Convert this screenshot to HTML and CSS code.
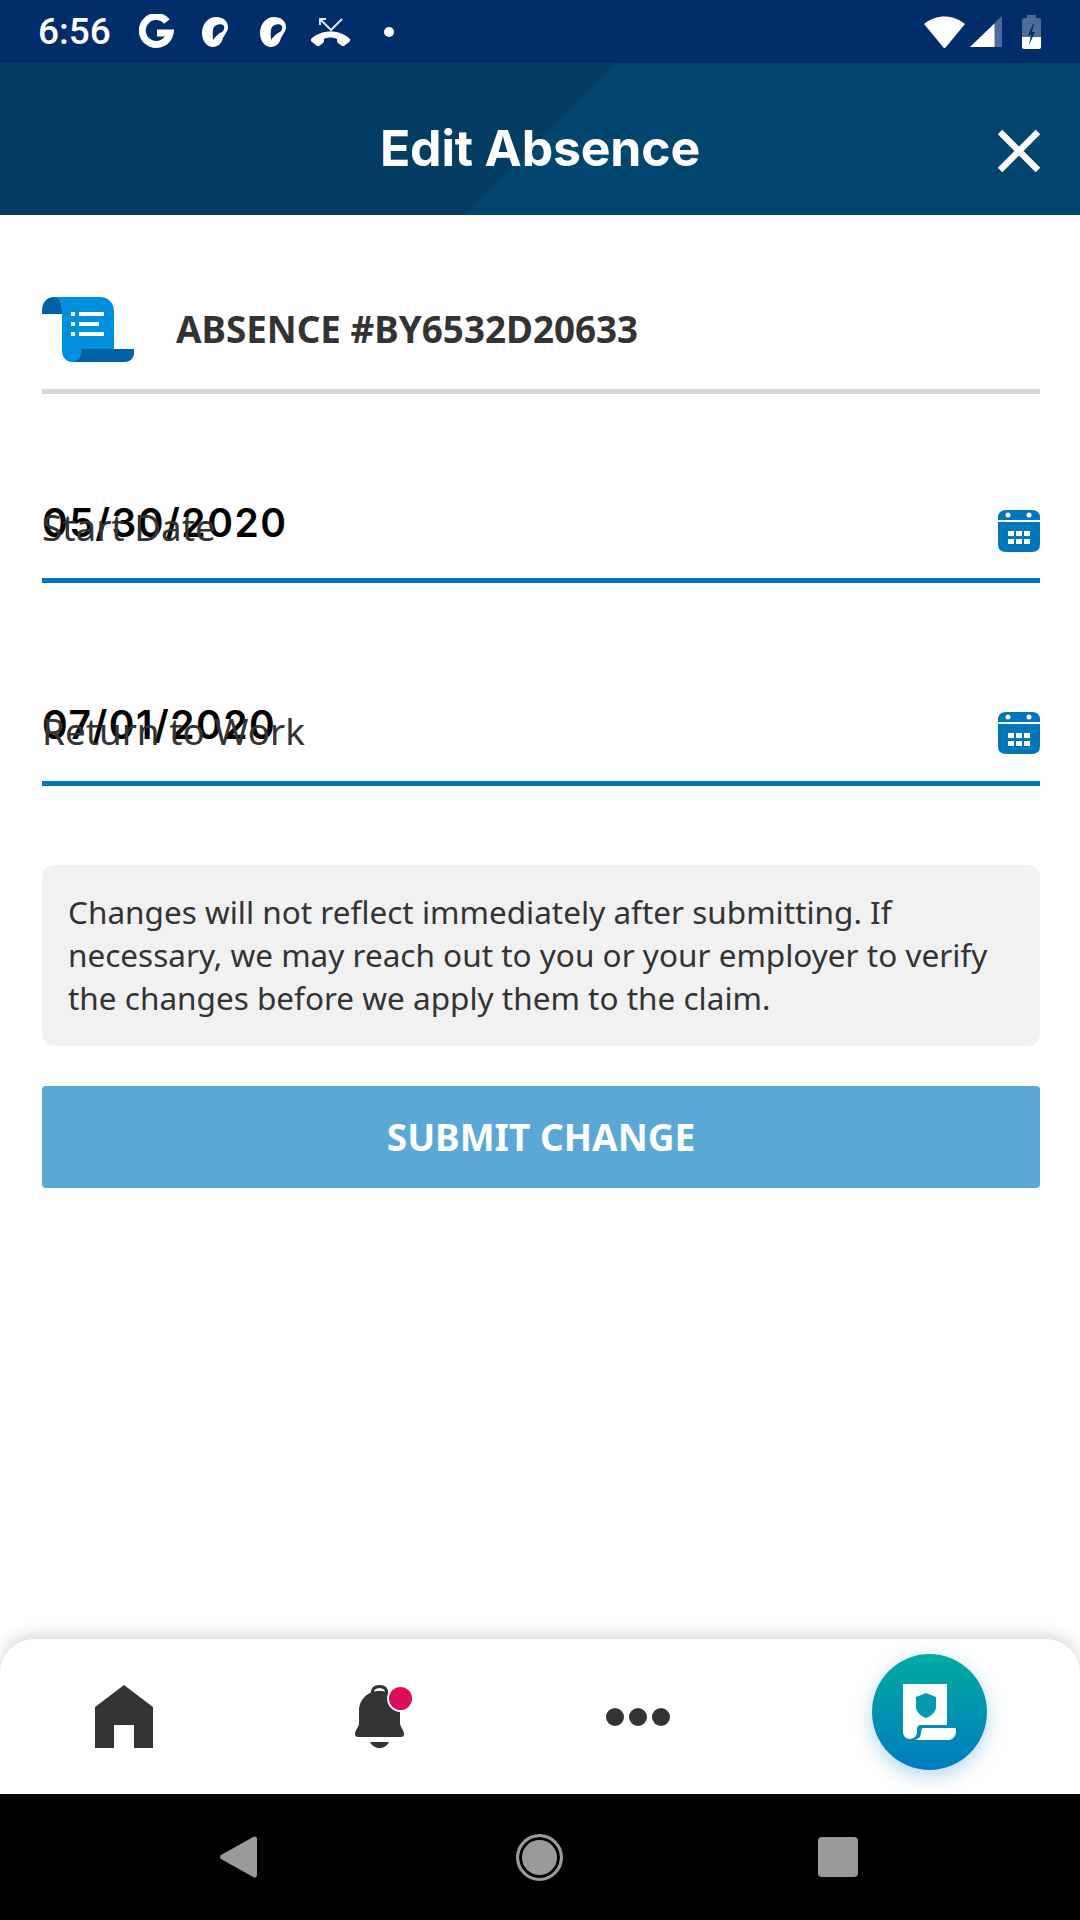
FILE: index.html
```html
<!DOCTYPE html>
<html lang="en">

<head>
    <meta charset="UTF-8">
    <meta name="viewport" content="width=device-width, initial-scale=1.0">
    <title>Edit Absence</title>
    <link rel="stylesheet" href="styles.css">
</head>

<body>
    <div class="status-bar">
        <span class="status-time">6:56</span>
        <svg class="icon-g" width="35" height="35" viewBox="0 0 35 35">
            <path d="M28 7.500A14 14 0 1 0 31 19H18" fill="none" stroke="#fff" stroke-width="7" />
        </svg>
        <svg class="icon-ear" width="26" height="30" viewBox="0 0 26 30">
            <path fill="#fff" fill-rule="evenodd" d="M14 0C21 0 26 4 26 10C26 14 23 17 21 21C20 26 16 30 11 30C5 30 0 24 0 16C0 7 6 0 14 0ZM12 10C14 7 20 6 22 9C23 12 21 15 18 16C15 18 13 20 11 23C11 18 10 14 12 10Z" />
        </svg>
        <svg class="icon-ear-2" width="26" height="30" viewBox="0 0 26 30">
            <path fill="#fff" fill-rule="evenodd" d="M14 0C21 0 26 4 26 10C26 14 23 17 21 21C20 26 16 30 11 30C5 30 0 24 0 16C0 7 6 0 14 0ZM12 10C14 7 20 6 22 9C23 12 21 15 18 16C15 18 13 20 11 23C11 18 10 14 12 10Z" />
        </svg>
        <svg class="icon-missed" width="39" height="29" viewBox="0 0 39 29">
            <path d="M9 8V2H15M9 2L20 13L31 2" fill="none" stroke="#dfe6f0" stroke-width="2" />
            <path fill="#fff" d="M0 22C10 12 29 12 39 22C39.500 23 39 24 38 25L33 29Q32 29.500 31 29L27 26C26 25 26 24 26 22C22 20 17 20 13 22C13 24 13 25 12 26L8 29Q7 29.500 6 29L1 25C0 24 -0.500 23 0 22Z" />
        </svg>
        <span class="status-dot"></span>

        <div class="status-right">
            <svg width="41" height="32" viewBox="0 0 41 32">
                <path fill="#fff" d="M0 8C12 -2 29 -2 41 8L22 31Q20.500 33 19 31Z" />
            </svg>
            <svg class="icon-signal" width="32" height="31" viewBox="0 0 32 31">
                <path fill="#fff" opacity="0.3" d="M32 0V31H0Z" />
                <path fill="#fff" d="M24.500 7.500V31H0Z" />
            </svg>
            <svg class="icon-battery" width="19" height="34" viewBox="0 0 19 34">
                <path fill="#fff" opacity="0.3" d="M5 0H14V3H17Q19 3 19 5V22H0V5Q0 3 2 3H5Z" />
                <path fill="#fff" d="M0 22H19V32Q19 34 17 34H2Q0 34 0 32Z" />
                <path fill="#012d6b" d="M11 9L6 20H9L7 30L13 17H10L12 9Z" />
            </svg>
        </div>
    </div>

    <header class="top-bar">
        <h1 class="title">Edit Absence</h1>
        <svg class="close-icon" width="42" height="42" viewBox="0 0 42 42">
            <path d="M2 2L40 40M40 2L2 40" stroke="#fff" stroke-width="6.500" />
        </svg>
    </header>

    <main class="content">
        <div class="absence-row">
            <svg class="absence-icon" width="92" height="65" viewBox="0 0 92 65">
                <path fill="#0090dd" d="M12 0H58C66 0 72 6 72 14V65H30C24 65 20 60 20 54V14C20 6 18 0 12 0Z" />
                <path fill="#0062a6" d="M12 0C5 0 0 5 0 14V17H20V14C20 6 18 0 12 0Z" />
                <path fill="#0062a6" d="M40 52H92V56C92 61 88 65 83 65H30C36 65 40 60 40 52Z" />
                <path fill="#fff" d="M29 15H33V19H29ZM37 15H62V19H37ZM29 25H33V29H29ZM37 25H57V29H37ZM29 35H33V39H29ZM37 35H62V39H37Z" />
            </svg>
            <span class="absence-number">ABSENCE #BY6532D20633</span>
        </div>

        <div class="field field-start">
            <span class="field-value">05/30/2020</span>
            <span class="field-label">Start Date</span>
            <svg width="42" height="42" viewBox="0 0 42 42">
                <path fill="#0077bd" d="M8 0H34Q42 0 42 8V10H0V8Q0 0 8 0ZM0 12H42V34Q42 42 34 42H8Q0 42 0 34Z" />
                <circle cx="10" cy="5" r="2.500" fill="#fff" />
                <circle cx="31" cy="5" r="2.500" fill="#fff" />
                <path fill="#fff" d="M10 21H16V26H10ZM18 21H24V26H18ZM26 21H32V26H26ZM10 29H16V34H10ZM18 29H24V34H18ZM26 29H32V34H26Z" />
            </svg>
        </div>

        <div class="field field-return">
            <span class="field-value">07/01/2020</span>
            <span class="field-label">Return to Work</span>
            <svg width="42" height="42" viewBox="0 0 42 42">
                <path fill="#0077bd" d="M8 0H34Q42 0 42 8V10H0V8Q0 0 8 0ZM0 12H42V34Q42 42 34 42H8Q0 42 0 34Z" />
                <circle cx="10" cy="5" r="2.500" fill="#fff" />
                <circle cx="31" cy="5" r="2.500" fill="#fff" />
                <path fill="#fff" d="M10 21H16V26H10ZM18 21H24V26H18ZM26 21H32V26H26ZM10 29H16V34H10ZM18 29H24V34H18ZM26 29H32V34H26Z" />
            </svg>
        </div>

        <p class="note">Changes will not reflect immediately after submitting. If necessary, we may reach out to you or your employer to verify the changes before we apply them to the claim.</p>

        <button class="submit-btn">SUBMIT CHANGE</button>
    </main>

    <nav class="bottom-nav">
        <svg class="nav-home" width="58" height="63" viewBox="0 0 58 63">
            <path fill="#333" d="M29 0L58 22V63H39V40H19V63H0V22Z" />
        </svg>
        <div class="nav-bell">
            <svg width="49" height="63" viewBox="0 0 49 63">
                <path fill="#333" d="M24.500 6C13 6 4 14 4 26V38C4 42 0 45 0 49C0 51 1 52 3 52H46C48 52 49 51 49 49C49 45 45 42 45 38V26C45 14 36 6 24.500 6Z" />
                <path fill="none" stroke="#333" stroke-width="3" d="M17 9C17 4 20 1.500 24.500 1.500S32 4 32 9" />
                <path fill="#333" d="M15 57H34C32 61 28 63 24.500 63S17 61 15 57Z" />
            </svg>
            <span class="badge"></span>
        </div>
        <div class="nav-dots">
            <span></span>
            <span></span>
            <span></span>
        </div>
        <div class="nav-fab">
            <svg width="53" height="56" viewBox="0 0 53 56">
                <path fill="#fff" d="M0 0H44V41H18C15 41 14 43 14 46V48C14 52 11 55 7 55C3 55 0 52 0 48Z" />
                <path fill="#fff" d="M19 44H53V47C53 52 50 56 45 56H12C16 55 18 52 18 48Z" />
                <path fill="#0399ae" d="M23 9L33 13V23C33 28 28 32 23 34C18 32 13 28 13 23V13Z" />
            </svg>
        </div>
    </nav>

    <div class="system-nav">
        <svg class="sys-back" width="37" height="42" viewBox="0 0 37 42">
            <path fill="#9a9a9a" d="M34 0.500Q37 0 37 3V39Q37 42 34 41.500L1 23Q-1 21 1 19Z" />
        </svg>
        <div class="sys-home"></div>
        <div class="sys-recent"></div>
    </div>
</body>

</html>
```

FILE: styles.css
```css
html,
body {
    margin: 0;
    padding: 0;
}

body {
    width: 1080px;
    height: 1920px;
    display: flex;
    flex-direction: column;
    background-color: #fff;
    overflow: hidden;
}

/* status bar */
.status-bar {
    height: 63px;
    flex: none;
    display: flex;
    align-items: center;
    padding-left: 38px;
    padding-right: 39px;
    box-sizing: border-box;
    background-color: #012d6b;
}

.status-time {
    width: 71px;
    color: #fff;
    font-family: Roboto, sans-serif;
    font-size: 37px;
    font-weight: 500;
    line-height: 63px;
}

.icon-g {
    margin-left: 30px;
}

.icon-ear {
    margin-left: 28px;
}

.icon-ear-2 {
    margin-left: 32px;
}

.icon-missed {
    margin-left: 25px;
}

.status-dot {
    width: 10px;
    height: 10px;
    margin-left: 34px;
    border-radius: 50%;
    background-color: #fff;
}

.status-right {
    margin-left: auto;
    display: flex;
    align-items: center;
}

.icon-signal {
    margin-left: 5px;
}

.icon-battery {
    margin-left: 20px;
}

/* header */
.top-bar {
    height: 152px;
    flex: none;
    box-sizing: border-box;
    padding-top: 17px;
    display: flex;
    align-items: center;
    justify-content: center;
    position: relative;
    background: linear-gradient(135deg, #033d63 0, #033d63 436px, #02456f 436px);
}

.title {
    margin: 0;
    color: #fff;
    font-family: Inter, sans-serif;
    font-size: 50px;
    font-weight: 700;
    letter-spacing: -0.200px;
}

.close-icon {
    position: absolute;
    right: 40px;
    top: 67px;
}

/* form */
.content {
    flex: 1;
    padding: 0 40px 0 42px;
}

.absence-row {
    display: flex;
    align-items: center;
    padding-top: 82px;
    padding-bottom: 27px;
    border-bottom: 5px solid #d6d6d3;
}

.absence-number {
    margin-left: 42px;
    margin-top: -2px;
    color: #333;
    font-family: "Noto Sans", sans-serif;
    font-size: 36.800px;
    font-weight: 700;
}

.field {
    position: relative;
    display: flex;
    justify-content: space-between;
    align-items: flex-start;
    padding-bottom: 26px;
    border-bottom: 5px solid #0077bd;
}

.field-start {
    margin-top: 116px;
}

.field-return {
    margin-top: 129px;
    padding-bottom: 27px;
}

.field-value {
    margin-top: -8px;
    color: #000;
    font-family: Inter, sans-serif;
    font-size: 39px;
    font-weight: 600;
    letter-spacing: 1.500px;
    line-height: 42px;
}

/* the label sits on top of the value, that is how the screen looks */
.field-label {
    position: absolute;
    left: 0;
    top: -5px;
    color: #333;
    font-family: "Noto Sans", sans-serif;
    font-size: 36.800px;
    line-height: 44px;
}

.field-return .field-label {
    top: -3px;
}

.note {
    margin: 79px 0 0;
    padding: 25px 26px 27px;
    background-color: #f1f1f1;
    border-radius: 12px;
    color: #333;
    font-family: "Noto Sans", sans-serif;
    font-size: 31.500px;
    line-height: 43px;
}

.submit-btn {
    display: block;
    width: 100%;
    height: 102px;
    margin-top: 40px;
    padding-bottom: 2px;
    border: none;
    border-radius: 4px;
    background-color: #5aa8d5;
    color: #fff;
    font-family: "Noto Sans", sans-serif;
    font-size: 37px;
    font-weight: 700;
}

/* bottom nav */
.bottom-nav {
    height: 155px;
    flex: none;
    position: relative;
    display: flex;
    align-items: center;
    padding-left: 95px;
    gap: 202px;
    border-radius: 34px 34px 0 0;
    background-color: #fff;
    box-shadow: 0 -4px 16px rgba(0, 0, 0, 0.16);
}

.nav-bell {
    position: relative;
    height: 63px;
}

.badge {
    position: absolute;
    left: 32px;
    top: 0;
    width: 23px;
    height: 23px;
    border: 2px solid #fff;
    border-radius: 50%;
    background-color: #dd0d5c;
}

.nav-dots {
    display: flex;
    gap: 5px;
}

.nav-dots span {
    width: 18px;
    height: 18px;
    border-radius: 50%;
    background-color: #333;
}

.nav-fab {
    width: 115px;
    height: 116px;
    margin-top: -10px;
    display: flex;
    align-items: center;
    justify-content: center;
    border-radius: 50%;
    background: linear-gradient(180deg, #00ac9f, #007bbf);
    box-shadow: 0 6px 20px rgba(0, 123, 191, 0.3);
}

/* android nav */
.system-nav {
    height: 126px;
    flex: none;
    position: relative;
    display: flex;
    align-items: center;
    padding-left: 220px;
    background-color: #000;
}

.sys-home {
    width: 41px;
    height: 41px;
    margin-left: 259px;
    border: 3px solid #9a9a9a;
    border-radius: 50%;
    background-color: #9a9a9a;
    box-shadow: inset 0 0 0 3px #000;
}

.sys-recent {
    width: 40px;
    height: 40px;
    margin-left: 255px;
    border-radius: 4px;
    background-color: #9a9a9a;
}
```
